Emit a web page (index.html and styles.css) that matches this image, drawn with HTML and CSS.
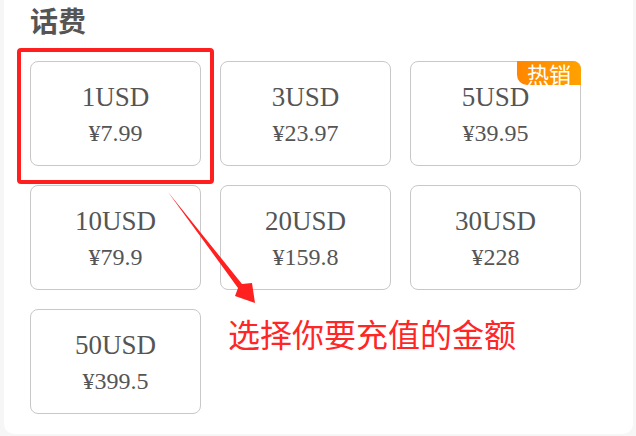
FILE: index.html
```html
<!DOCTYPE html>
<html lang="zh-CN">
<head>
  <meta charset="UTF-8">
  <meta name="viewport" content="width=device-width, initial-scale=1.0">
  <title>话费充值</title>
  <link rel="stylesheet" href="styles.css">
</head>
<body>
  <div class="panel">
    <h2 class="section-title">话费</h2>

    <div class="amount-grid">
      <div class="amount-card">
        <div class="amount-face">1USD</div>
        <div class="amount-price">¥7.99</div>
      </div>
      <div class="amount-card">
        <div class="amount-face">3USD</div>
        <div class="amount-price">¥23.97</div>
      </div>
      <div class="amount-card">
        <div class="amount-face">5USD</div>
        <div class="amount-price">¥39.95</div>
        <span class="hot-badge">热销</span>
      </div>
      <div class="amount-card">
        <div class="amount-face">10USD</div>
        <div class="amount-price">¥79.9</div>
      </div>
      <div class="amount-card">
        <div class="amount-face">20USD</div>
        <div class="amount-price">¥159.8</div>
      </div>
      <div class="amount-card">
        <div class="amount-face">30USD</div>
        <div class="amount-price">¥228</div>
      </div>
      <div class="amount-card">
        <div class="amount-face">50USD</div>
        <div class="amount-price">¥399.5</div>
      </div>
    </div>

    <!-- 标注 -->
    <div class="mark-box"></div>
    <svg class="mark-arrow" width="100" height="125" viewBox="160 185 100 125">
      <polygon points="168,192 242,284 252,283 255,303 235,296 238,288" fill="#ff2020"/>
    </svg>
    <div class="mark-text">选择你要充值的金额</div>
  </div>
</body>
</html>
```

FILE: styles.css
```css
* {
  margin: 0;
  padding: 0;
  box-sizing: border-box;
}

body {
  background-color: #f6f6f7;
  font-family: "Noto Sans CJK SC", "Noto Sans", sans-serif;
  width: 636px;
  height: 436px;
  overflow: hidden;
}

.panel {
  position: relative;
  margin: 0 3px 0 4px;
  height: 434px;
  padding: 0 0 0 26px;
  background-color: #fff;
  border-radius: 0 0 10px 10px;
}

.section-title {
  font-size: 28px;
  line-height: 40px;
  font-weight: bold;
  color: #555;
  margin-bottom: 21px;
}

.amount-grid {
  display: grid;
  grid-template-columns: repeat(3, 171px);
  grid-auto-rows: 105px;
  column-gap: 19px;
  row-gap: 19px;
}

.amount-card {
  position: relative;
  border: 1px solid #c8c8c8;
  border-radius: 8px;
  padding-top: 17px;
  text-align: center;
  font-family: "Liberation Serif", "Times New Roman", serif;
  color: #555;
}

.amount-face {
  font-size: 27px;
  line-height: 36px;
}

.amount-price {
  font-size: 24px;
  line-height: 36px;
}

.hot-badge {
  position: absolute;
  top: -1px;
  right: -1px;
  width: 64px;
  height: 24px;
  border-radius: 0 8px 0 10px;
  background: linear-gradient(to right, #ff8600, #ffa200);
  color: #fff;
  font-family: "Noto Sans CJK SC", sans-serif;
  font-size: 22px;
  line-height: 24px;
  text-align: center;
}

.mark-box {
  position: absolute;
  left: 13px;
  top: 48px;
  width: 197px;
  height: 136px;
  border: 4px solid #ff1f1f;
  border-radius: 4px;
}

.mark-arrow {
  position: absolute;
  left: 156px;
  top: 185px;
}

.mark-text {
  position: absolute;
  left: 224px;
  top: 317px;
  font-size: 32px;
  line-height: 32px;
  color: #ff2626;
  white-space: nowrap;
}
```
